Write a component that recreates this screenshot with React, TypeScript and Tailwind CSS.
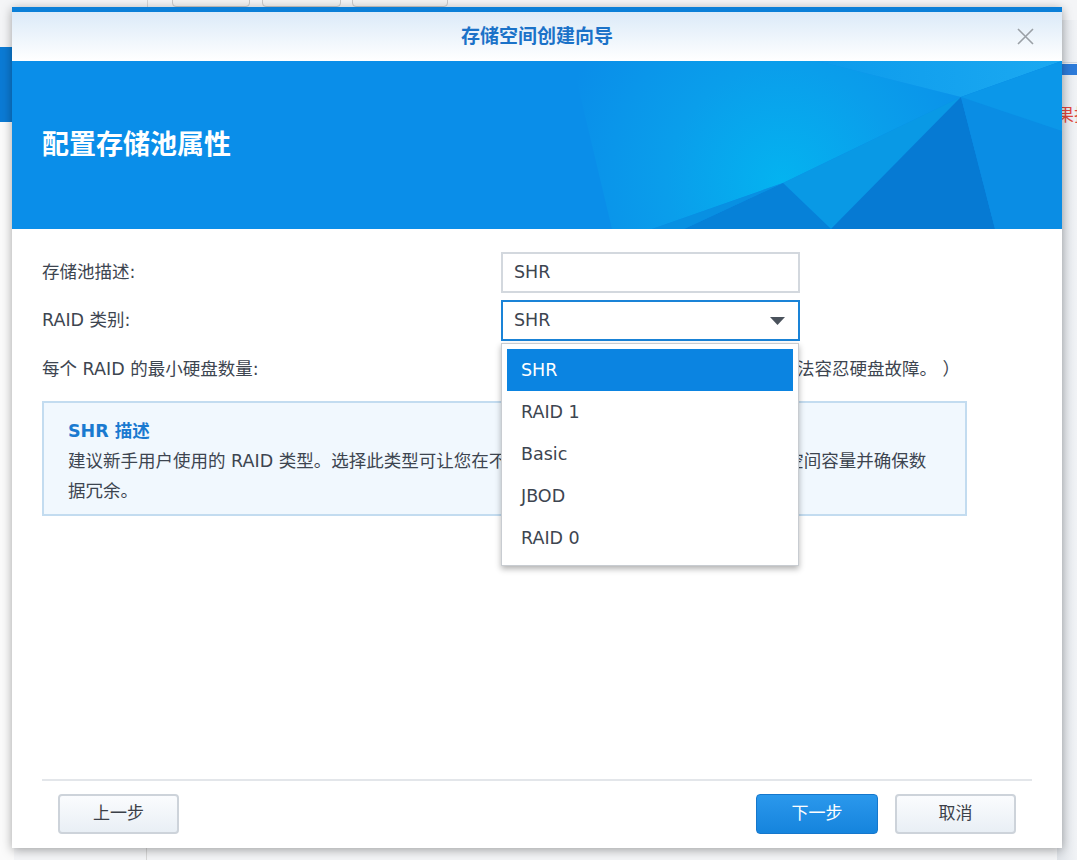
import React from "react";

const FONT = '"DejaVu Sans", "Noto Sans CJK SC", sans-serif';

function Banner() {
  return (
    <div className="relative h-[168px] bg-[#0a8ee9] overflow-hidden">
      <svg
        className="absolute inset-0"
        width="1050"
        height="168"
        viewBox="0 0 1050 168"
      >
        <defs>
          <radialGradient
            id="cy"
            gradientUnits="userSpaceOnUse"
            cx="770"
            cy="120"
            r="230"
          >
            <stop offset="0" stopColor="#04b3f0" />
            <stop offset="0.5" stopColor="#0a9eeb" />
            <stop offset="1" stopColor="#0a8ee9" />
          </radialGradient>
          <linearGradient id="tr" x1="0" y1="0" x2="1" y2="0">
            <stop offset="0" stopColor="#0d9bec" />
            <stop offset="1" stopColor="#1ba9f1" />
          </linearGradient>
        </defs>
        <polygon points="560,0 805,0 949,36 771,122 640,168 600,168" fill="url(#cy)" />
        <polygon points="805,0 1050,0 949,36" fill="url(#tr)" />
        <polygon points="771,122 949,36 819,168" fill="#0999e5" />
        <polygon points="672,168 771,122 819,168" fill="#0681d8" />
        <polygon points="640,168 771,122 672,168" fill="#0890e2" />
        <polygon points="949,36 983,168 819,168" fill="#067ad3" />
        <polygon points="949,36 1050,0 1050,168 983,168" fill="#0a8de4" />
        <polygon points="949,36 1050,0 1050,70" fill="#0b97e9" />
      </svg>
      <div
        className="relative pl-[30px] pt-[66px] text-[27px] font-bold text-white leading-[36px]"
        style={{ fontFamily: FONT }}
      >
        配置存储池属性
      </div>
    </div>
  );
}

function Btn({
  children,
  primary,
}: {
  children: React.ReactNode;
  primary?: boolean;
}) {
  return (
    <button
      className={
        primary
          ? "w-[122px] h-[40px] rounded-[4px] border border-[#1577cc] bg-gradient-to-b from-[#2a98ec] to-[#1584dd] text-white text-[17px]"
          : "w-[121px] h-[40px] rounded-[4px] border-2 border-[#cdd3da] bg-gradient-to-b from-[#fbfcfe] to-[#e9eff5] text-[#3b4048] text-[17px]"
      }
      style={{ fontFamily: FONT }}
    >
      {children}
    </button>
  );
}

const items = ["SHR", "RAID 1", "Basic", "JBOD", "RAID 0"];

export default function App() {
  return (
    <div
      className="relative w-[1077px] h-[860px] overflow-hidden bg-[#f4f5f7]"
      style={{ fontFamily: FONT }}
    >
      {/* background desktop fragments */}
      <div className="absolute left-[147px] top-0 w-[315px] h-[7px] border-l border-[#d6d6d6]" />
      <div className="absolute left-[172px] top-[-4px] w-[78px] h-[11px] rounded-b-[4px] border border-[#c9c9c9] bg-[#f3f3f3]" />
      <div className="absolute left-[262px] top-[-4px] w-[79px] h-[11px] rounded-b-[4px] border border-[#c9c9c9] bg-[#f3f3f3]" />
      <div className="absolute left-[352px] top-[-4px] w-[96px] h-[11px] rounded-b-[4px] border border-[#c9c9c9] bg-[#f3f3f3]" />
      <div className="absolute left-0 top-[47px] w-[14px] h-[75px] bg-[#0b7bd5]" />
      <div className="absolute left-0 top-[122px] w-[14px] h-[738px] bg-[#fbfbfb]" />
      <div className="absolute right-0 top-[20px] w-[20px] h-[840px] bg-gradient-to-r from-[#dfe3e8] to-[#f1f3f6]" />
      <div className="absolute right-0 top-[62px] w-[20px] h-[1px] bg-[#cfd6de]" />
      <div className="absolute right-0 top-[64px] w-[20px] h-[11px] bg-[#2d7bd9]" />
      <div className="absolute left-[1057px] top-[103px] w-[20px] overflow-hidden text-[17px] text-[#e0453c] whitespace-nowrap">
        果护
      </div>
      <div className="absolute left-[146px] top-[840px] w-[1px] h-[20px] bg-[#d8d8d8]" />

      {/* dialog window */}
      <div className="absolute left-[12px] top-[7px] w-[1050px] h-[841px] bg-white flex flex-col shadow-[0_2px_10px_rgba(0,0,0,0.35)]">
        <div className="h-[5px] bg-[#0a7fd8]" />
        <div className="relative h-[49px] flex items-center justify-center bg-gradient-to-b from-[#dbeaf8] to-[#ffffff]">
          <span className="text-[19px] font-bold text-[#1b72c8]">
            存储空间创建向导
          </span>
          <svg
            className="absolute right-[28px] top-[16px]"
            width="17"
            height="17"
            viewBox="0 0 17 17"
          >
            <path
              d="M1 1 L16 16 M16 1 L1 16"
              stroke="#9aa0a6"
              strokeWidth="1.6"
              fill="none"
            />
          </svg>
        </div>
        <Banner />

        <div className="flex-1 px-[30px] pt-[23px] text-[17.5px] text-[#3d4550]">
          <div className="flex items-center h-[41px]">
            <div className="w-[459px]">存储池描述:</div>
            <div className="w-[299px] h-[41px] border-2 border-[#d3d8de] flex items-center px-[11px]">
              SHR
            </div>
          </div>
          <div className="flex items-center h-[41px] mt-[7px]">
            <div className="w-[459px]">RAID 类别:</div>
            <div className="relative w-[299px] h-[41px] border-2 border-[#1a83d7] flex items-center px-[11px]">
              <span className="flex-1">SHR</span>
              <svg width="15" height="8" viewBox="0 0 15 8" className="mr-[2px]">
                <polygon points="0,0 15,0 7.5,8" fill="#4a525c" />
              </svg>
              {/* open dropdown */}
              <div className="absolute left-[-2px] top-[41px] z-10 w-[298px] bg-white border border-[#c8ccd1] shadow-[0_3px_6px_rgba(0,0,0,0.3)] pt-[5px] pb-[6px] px-[5px]">
                {items.map((it, i) => (
                  <div
                    key={it}
                    className={
                      i === 0
                        ? "h-[42px] flex items-center px-[14px] bg-[#0b84e1] text-white"
                        : "h-[42px] flex items-center px-[14px] text-[#3d4550]"
                    }
                  >
                    {it}
                  </div>
                ))}
              </div>
            </div>
          </div>
          <div className="flex items-center h-[42px] mt-[7px]">
            <div className="w-[459px]">每个 RAID 的最小硬盘数量:</div>
            <div className="whitespace-nowrap">
              1（若只有 1 个硬盘，则该存储池将无法容忍硬盘故障。 ）
            </div>
          </div>
          <div className="mt-[11px] w-[925px] border-2 border-[#c3dcf0] bg-[#f1f8fe] pl-[24px] pr-[20px] pt-[13px] pb-[8px] leading-[30px]">
            <div className="font-bold text-[#1a7ad0]">SHR 描述</div>
            <div className="whitespace-nowrap">
              建议新手用户使用的 RAID 类型。选择此类型可让您在不同容量的硬盘上最大限度地利用存储空间容量并确保数
              <br />
              据冗余。
            </div>
          </div>
        </div>

        <div className="px-[30px]">
          <div className="h-[2px] bg-[#e3e6ea]" />
        </div>
        <div className="flex items-center justify-between px-[46px] pt-[13px] pb-[14px]">
          <Btn>上一步</Btn>
          <div className="flex gap-[17px]">
            <Btn primary>下一步</Btn>
            <Btn>取消</Btn>
          </div>
        </div>
      </div>
    </div>
  );
}
